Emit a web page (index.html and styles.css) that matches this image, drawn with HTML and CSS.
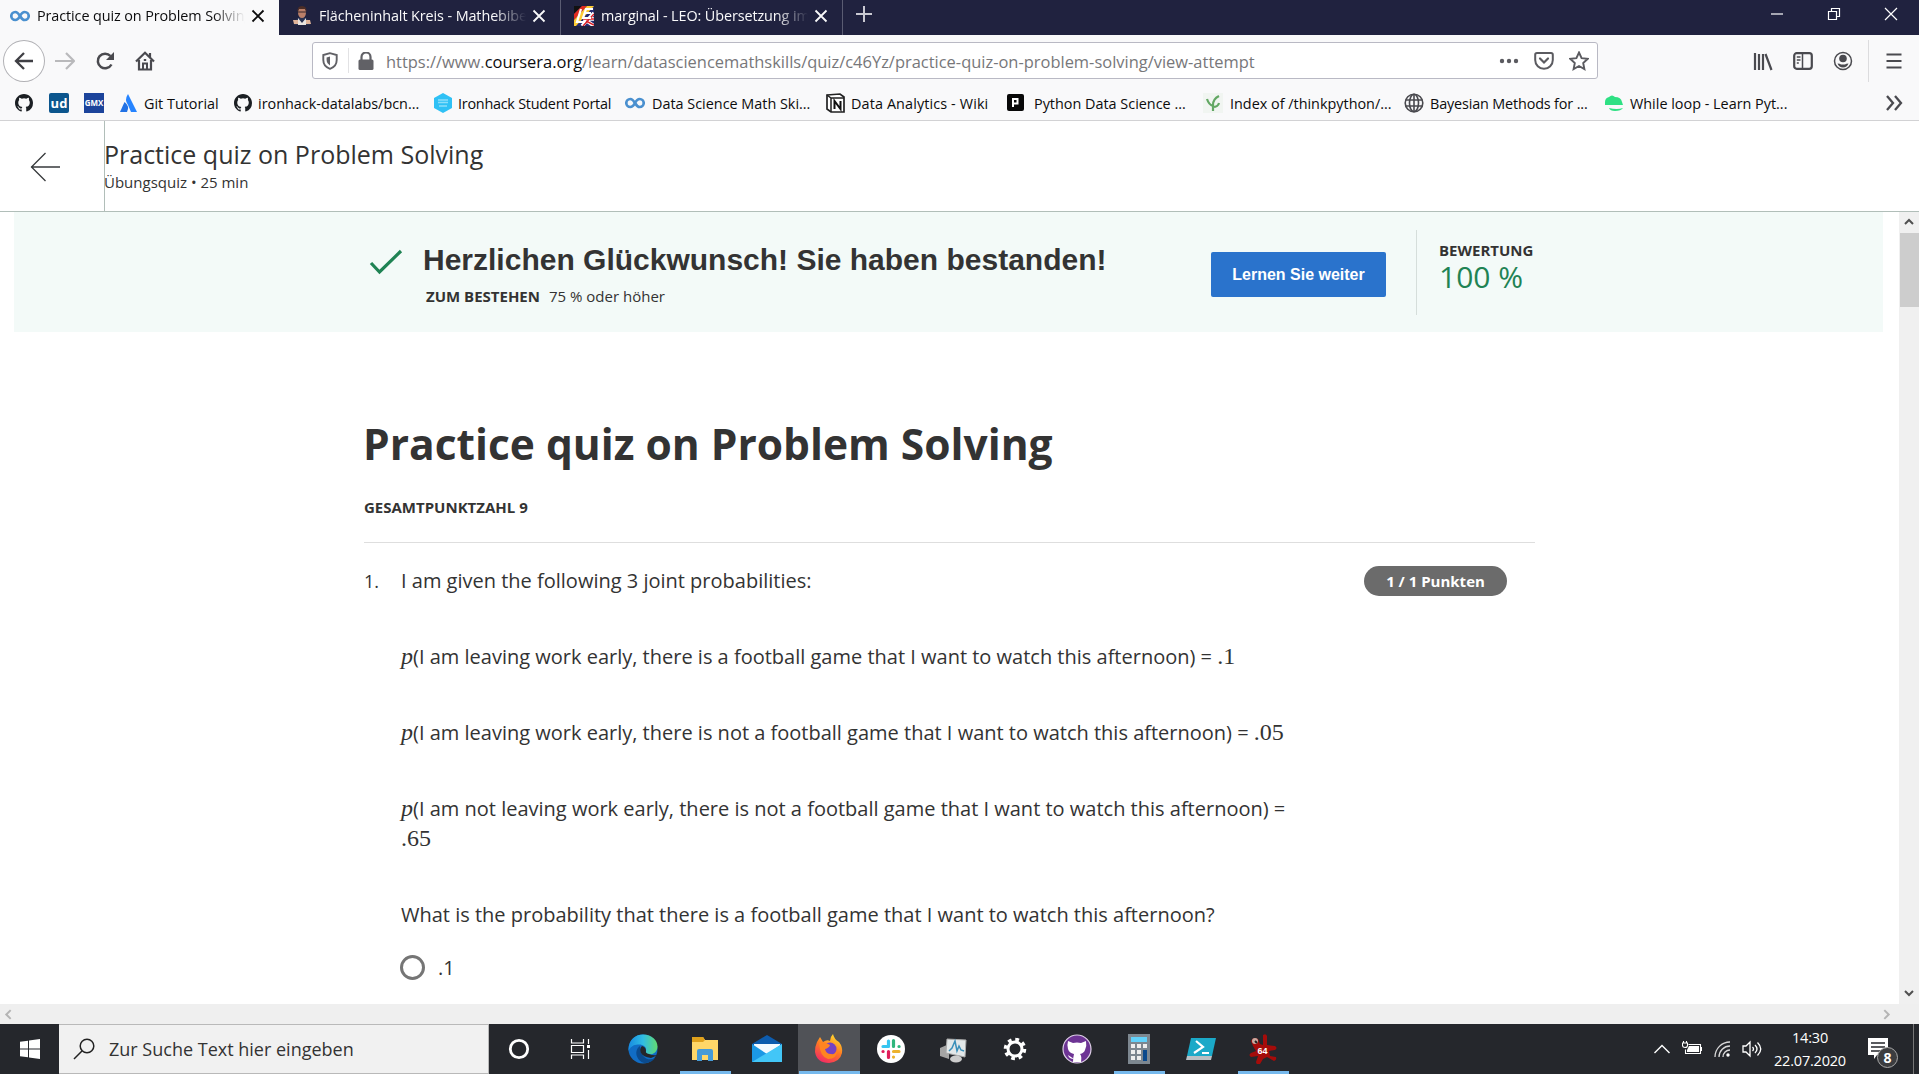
FILE: index.html
```html
<!DOCTYPE html>
<html lang="de">
<head>
<meta charset="utf-8">
<title>Practice quiz on Problem Solving</title>
<link rel="stylesheet" href="styles.css">
</head>
<body>
<svg class="defs" aria-hidden="true">
  <symbol id="octocat" viewBox="0 0 16 16"><path d="M8 0C3.58 0 0 3.58 0 8c0 3.54 2.29 6.53 5.47 7.59.4.07.55-.17.55-.38 0-.19-.01-.82-.01-1.49-2.01.37-2.53-.49-2.69-.94-.09-.23-.48-.94-.82-1.13-.28-.15-.68-.52-.01-.53.63-.01 1.08.58 1.23.82.72 1.21 1.87.87 2.33.66.07-.52.28-.87.51-1.07-1.78-.2-3.64-.89-3.64-3.95 0-.87.31-1.59.82-2.15-.08-.2-.36-1.02.08-2.12 0 0 .67-.21 2.2.82a7.6 7.6 0 0 1 4 0c1.53-1.04 2.2-.82 2.2-.82.44 1.1.16 1.92.08 2.12.51.56.82 1.27.82 2.15 0 3.07-1.87 3.75-3.65 3.95.29.25.54.73.54 1.48 0 1.07-.01 1.93-.01 2.2 0 .21.15.46.55.38A8 8 0 0 0 16 8c0-4.42-3.58-8-8-8z"/></symbol>
  <symbol id="infinity" viewBox="0 0 20 20"><path d="M10 10C8.500 7.400 7.300 6 5.300 6a4 4 0 0 0 0 8c2.500 0 3.700-2 4.700-4s2.200-4 4.700-4a4 4 0 0 1 0 8c-2 0-3.200-1.400-4.700-4z" fill="none" stroke="#4a90cf" stroke-width="2.700"/></symbol>
  <symbol id="cross" viewBox="0 0 14 14"><path d="M1.500 1.500l11 11M12.500 1.500l-11 11" fill="none" stroke="currentColor" stroke-width="1.800"/></symbol>
</svg>

<header class="tabs">
  <div class="tab tab-active"><svg class="i20"><use href="#infinity"/></svg><span class="tab-title">Practice quiz on Problem Solving</span><svg class="close"><use href="#cross"/></svg></div>
  <div class="tab"><svg class="i20" viewBox="0 0 20 20"><path d="M2 19q1-8 8-8t8 8z" fill="#283252"/><path d="M6 12l4 5 4-5v7H6z" fill="#e9e4e0"/><path d="M1 14h5v4H2zM14 14h4l1 4h-5z" fill="#e0b49a"/><ellipse cx="10" cy="6.500" rx="4" ry="5.500" fill="#b97f69"/><path d="M5.500 6Q5 0 10 0t4.500 6L13 3H7z" fill="#4b2d26"/><path d="M6 6h8" stroke="#38292b"/></svg><span class="tab-title">Flächeninhalt Kreis - Mathebibel</span><svg class="close"><use href="#cross"/></svg></div>
  <div class="tab"><svg class="i20" viewBox="0 0 20 20"><path fill="#252a70" d="M0 0h20v20H0z"/><path fill="#111" d="M0 0h8L0 8z"/><path fill="#e02b20" d="M8 0h5L0 14V8z"/><path fill="#fc3" d="M13 0h7L2 20H0v-6z"/><path d="M8 20L20 7M10 13l10 7M9 13h11" stroke="#fff" stroke-width="3.500"/><path d="M9 20L20 8M9 13h11M12 15l8 4" stroke="#d92028" stroke-width="1.500"/><path d="M7 3L3 16h8M19 3h-7l-3 9h8M11 7h6" fill="none" stroke="#fff" stroke-width="2.200"/></svg><span class="tab-title">marginal - LEO: Übersetzung im E</span><svg class="close"><use href="#cross"/></svg></div>
  <svg class="plus" viewBox="0 0 18 18"><path d="M9 1v16M1 9h16" stroke="#c9c9d2" stroke-width="2"/></svg>
  <div class="window-buttons">
    <svg viewBox="0 0 14 14"><path d="M1 7h12" stroke="#fff" stroke-width="1.200"/></svg>
    <svg viewBox="0 0 14 14"><path d="M1.500 4.500h8v8h-8zM4.500 4.500v-3h8v8h-3" fill="none" stroke="#fff" stroke-width="1.200"/></svg>
    <svg viewBox="0 0 14 14"><path d="M1 1l12 12M13 1L1 13" stroke="#fff" stroke-width="1.200"/></svg>
  </div>
</header>

<nav class="toolbar">
  <div class="back"><svg class="i20" viewBox="0 0 20 20"><path d="M19 10H2M10 2L2 10l8 8" fill="none" stroke="#3f3f44" stroke-width="2.300"/></svg></div>
  <svg class="i20 forward" viewBox="0 0 20 20"><path d="M0 10h18M11 2l8 8-8 8" fill="none" stroke="#b9b9bb" stroke-width="2.200"/></svg>
  <svg class="i20 reload" viewBox="0 0 20 20"><path d="M16.500 13.500A7.300 7.300 0 1 1 15.500 5" fill="none" stroke="#4a4a4f" stroke-width="2.500"/><path d="M19 1v8h-8z" fill="#4a4a4f"/></svg>
  <svg class="i20 home" viewBox="0 0 20 20"><path d="M1 10.500L10 1.700l9 8.800M4 9v9.500h12V9M15 2v5" fill="none" stroke="#4a4a4f" stroke-width="2.200"/><path d="M8 18v-5.500h4V18M8.800 9h2.400" fill="none" stroke="#4a4a4f" stroke-width="2"/></svg>
  <div class="address">
    <svg class="i18 shield" viewBox="0 0 18 18"><path d="M9 1.200L2.300 3v5c0 4.500 3 7.500 6.700 8.800 3.700-1.300 6.700-4.300 6.700-8.800V3z" fill="none" stroke="#616166" stroke-width="1.900"/><path d="M9 4.500v9C7 12 5.600 10.500 5.600 8V5.400z" fill="#616166"/></svg>
    <span class="divider"></span>
    <svg class="i18 lock" viewBox="0 0 18 18"><path d="M4.500 8V5a4.500 4.500 0 0 1 9 0v3" fill="none" stroke="#616166" stroke-width="2.200"/><rect x="1.500" y="7.500" width="15" height="10.500" rx="1.500" fill="#616166"/></svg>
    <span class="url">https://www.<b>coursera.org</b>/learn/datasciencemathskills/quiz/c46Yz/practice-quiz-on-problem-solving/view-attempt</span>
    <svg class="i20 dots" viewBox="0 0 20 20"><g fill="#5b5b60"><circle cx="3" cy="10" r="2.200"/><circle cx="10" cy="10" r="2.200"/><circle cx="17" cy="10" r="2.200"/></g></svg>
    <svg class="i20 pocket" viewBox="0 0 20 20"><path d="M3 2h14q1.800 0 1.800 1.800V9a8.800 8.800 0 0 1-17.600 0V3.800Q1.200 2 3 2z" fill="none" stroke="#5b5b60" stroke-width="2"/><path d="M6 7.500l4 4 4-4" fill="none" stroke="#5b5b60" stroke-width="2.200" stroke-linecap="round"/></svg>
    <svg class="i20 star" viewBox="0 0 20 20"><path d="M10 1.500l2.600 5.600 6.100.7-4.500 4.200 1.200 6.100L10 15l-5.400 3.100L5.800 12 1.300 7.800l6.100-.7z" fill="none" stroke="#5b5b60" stroke-width="1.900"/></svg>
  </div>
  <div class="tools">
    <svg class="i20" viewBox="0 0 20 20"><path d="M2 2v17M6 3v16M10 3v16M12.500 3l6 16" fill="none" stroke="#4a4a4f" stroke-width="2.200"/></svg>
    <svg class="i20" viewBox="0 0 20 20"><rect x="1.200" y="2.200" width="17.600" height="15.600" rx="2.500" fill="none" stroke="#4a4a4f" stroke-width="2.200"/><path d="M9.500 2v16M3.800 6h3.700M3.800 9h3.700M3.800 12h2" stroke="#4a4a4f" stroke-width="1.500"/></svg>
    <svg class="i20" viewBox="0 0 20 20"><circle cx="10" cy="10" r="8.500" fill="none" stroke="#4a4a4f" stroke-width="1.500"/><circle cx="10" cy="7.500" r="3.800" fill="#4a4a4f"/><path d="M4.500 12.500q2.500 0 3.500 1h4q1-1 3.500-1-1.500 4-5.500 4t-5.500-4z" fill="#4a4a4f"/></svg>
  </div>
  <div class="menu"><svg class="i20" viewBox="0 0 20 20"><path d="M2.500 3.500h15M2.500 10h15M2.500 16.500h15" stroke="#4a4a4f" stroke-width="2.200"/></svg></div>
</nav>

<nav class="bookmarks">
  <div><svg class="i18b"><use href="#octocat"/></svg></div>
  <div><svg class="i20" viewBox="0 0 20 20"><rect width="20" height="20" rx="2" fill="#0c568d"/><text x="10" y="15" class="ud">ud</text></svg></div>
  <div><svg class="i20" viewBox="0 0 20 20"><path d="M0 0h20v20H0z" fill="#1c449b"/><text x="10" y="13" class="gmx">GMX</text></svg></div>
  <div><svg class="i20" viewBox="0 0 20 20"><path d="M9 1q-4 6 0 11l3 7h6z" fill="#2684ff"/><path d="M5.500 9Q11 13 8 19H1z" fill="#2272e5"/></svg><span>Git Tutorial</span></div>
  <div><svg class="i18b"><use href="#octocat"/></svg><span>ironhack-datalabs/bcn...</span></div>
  <div><svg class="i20" viewBox="0 0 20 20"><path d="M10 0l9 5v10l-9 5-9-5V5z" fill="#2fc1f5"/><path d="M5 7h10M5 9.500h10M6 13h8" stroke="#8bdefa" stroke-width="1.500"/></svg><span class="narrow">Ironhack Student Portal</span></div>
  <div><svg class="i20"><use href="#infinity"/></svg><span class="shift2">Data Science Math Ski...</span></div>
  <div><svg class="i20" viewBox="0 0 20 20"><path d="M1 2l13-1 4 3v15H5l-4-3z" fill="#fff" stroke="#222" stroke-width="1.700"/><path d="M1 2l4 3h13M5 5v14" fill="none" stroke="#222" stroke-width="1.500"/><path d="M8.500 16V8l6 8V8" fill="none" stroke="#111" stroke-width="2"/></svg><span class="wide">Data Analytics - Wiki</span></div>
  <div><svg class="i20" viewBox="0 0 20 20"><rect x="2" y="1" width="17" height="17" rx="2" fill="#080808"/><path d="M8 14V6h4.500v4.500H8" fill="none" stroke="#fff" stroke-width="2"/></svg><span class="shift4">Python Data Science ...</span></div>
  <div><svg class="i20" viewBox="0 0 20 20"><path d="M0 0h20v20H0z" fill="#f1f5f1"/><path d="M10 18V11M10 13Q6 12 4 6M10 12q0-6 6-9M10 14q5 0 6-4" fill="none" stroke="#62a763" stroke-width="2.200"/></svg><span class="shift2">Index of /thinkpython/...</span></div>
  <div><svg class="i20" viewBox="0 0 20 20"><g fill="none" stroke="#4a4a4f" stroke-width="1.600"><circle cx="10" cy="10" r="8.800"/><ellipse cx="10" cy="10" rx="4.500" ry="8.800"/><path d="M10 1v18M1.500 7h17M1.500 13h17"/></g></svg><span class="shift1 narrow2">Bayesian Methods for ...</span></div>
  <div><svg class="i20" viewBox="0 0 20 20"><path d="M1 9q0-4 4-5 3-3 6 0 6 0 7 5l1 3H1z" fill="#2ee083"/><path d="M5 15q8 2 14 0-2 3-8 3-5 0-6-3z" fill="#2ee083"/></svg><span class="shift1">While loop - Learn Pyt...</span></div>
  <div><svg class="i20" viewBox="0 0 20 20"><path d="M3 3l6 7-6 7M11 3l6 7-6 7" fill="none" stroke="#4a4a4f" stroke-width="2.300"/></svg></div>
</nav>

<section class="item-header">
  <div class="item-back"><svg viewBox="0 0 30 30"><path d="M30 15H1M15.500 1L1.500 15l14 14" fill="none" stroke="#373a3c" stroke-width="1.300"/></svg></div>
  <div class="item-title"><div class="name">Practice quiz on Problem Solving</div><div class="kind">Übungsquiz • 25 min</div></div>
</section>

<div class="viewport">
  <main class="page">
    <section class="banner">
      <svg class="check" viewBox="0 0 34 26"><path d="M2 14l8.500 9L32 2" fill="none" stroke="#1f8354" stroke-width="3.200"/></svg>
      <div class="result"><h2>Herzlichen Glückwunsch! Sie haben bestanden!</h2><div class="need"><b>ZUM BESTEHEN</b><span>75 % oder höher</span></div></div>
      <button class="next">Lernen Sie weiter</button>
      <div class="grade"><b>BEWERTUNG</b><span>100 %</span></div>
    </section>
    <article class="quiz">
      <h1>Practice quiz on Problem Solving</h1>
      <div class="total">GESAMTPUNKTZAHL 9</div>
      <div class="question">
        <span class="number">1.</span>
        <div class="prompt">
          <p>I am given the following 3 joint probabilities:</p>
          <p><i>p</i>(I am leaving work early, there is a football game that I want to watch this afternoon) = <em>.1</em></p>
          <p><i>p</i>(I am leaving work early, there is not a football game that I want to watch this afternoon) = <em>.05</em></p>
          <p><i>p</i>(I am not leaving work early, there is not a football game that I want to watch this afternoon) =<br><em>.65</em></p>
          <p class="ask">What is the probability that there is a football game that I want to watch this afternoon?</p>
          <div class="option"><span class="radio"></span><span class="label">.1</span></div>
        </div>
        <span class="points">1 / 1 Punkten</span>
      </div>
    </article>
  </main>
  <div class="vscroll">
    <svg viewBox="0 0 10 10"><path d="M1 7l4-4 4 4" fill="none" stroke="#505050" stroke-width="2"/></svg>
    <div class="thumb"></div>
    <svg viewBox="0 0 10 10"><path d="M1 3l4 4 4-4" fill="none" stroke="#505050" stroke-width="2"/></svg>
  </div>
</div>
<div class="hscroll">
  <svg viewBox="0 0 10 10"><path d="M7 1L3 5l4 4" fill="none" stroke="#b5b5b5" stroke-width="1.800"/></svg>
  <svg viewBox="0 0 10 10"><path d="M3 1l4 4-4 4" fill="none" stroke="#b5b5b5" stroke-width="1.800"/></svg>
</div>

<footer class="taskbar">
  <div class="start"><svg class="i20" viewBox="0 0 20 20"><path d="M0 2.800L8 1.700v7.800H0zM9 1.500L20 0v9.500H9zM0 10.500h8v7.800L0 17.200zM9 10.500h11V20L9 18.500z" fill="#fff"/></svg></div>
  <div class="search"><svg viewBox="0 0 22 22"><circle cx="14" cy="8" r="6.800" fill="none" stroke="#222" stroke-width="1.500"/><path d="M9.200 12.800L1 21" stroke="#222" stroke-width="1.500"/></svg><span>Zur Suche Text hier eingeben</span></div>
  <div class="apps">
    <div><svg viewBox="0 0 30 30"><circle cx="15" cy="15" r="8.700" fill="none" stroke="#fff" stroke-width="2.800"/></svg></div>
    <div><svg viewBox="0 0 30 30"><path d="M5.500 5v4h12V5M5.500 25v-4h12v4M5.500 11.500h12v7h-12zM22.500 5v5M22.500 16v9" fill="none" stroke="#fff" stroke-width="1.200"/><path d="M21 11h3v3h-3z" fill="#fff"/></svg></div>
    <div><svg viewBox="0 0 30 30"><defs><linearGradient id="edge" x2="1"><stop stop-color="#188be0"/><stop offset=".5" stop-color="#30bde4"/><stop offset="1" stop-color="#62da70"/></linearGradient></defs><circle cx="15" cy="15" r="14.500" fill="#116dc5"/><path d="M.5 15C1 5 8 .5 15 .5c9 0 14.500 6 14.500 12 0 5-4 8-8 8-3 0-4.500-1-3.500-3 1-5-3-7-7-7C6 10 2 13 .5 17z" fill="url(#edge)"/><path d="M12 12c-7 5-3 15 4 17 5 0 9-2 11-5-7 4-15-1-15-12z" fill="#0b4b8e"/><path d="M14 12q-3 3-1 7t10 5l7-3q-5 1-9-1-4-1-3-3 0-4-4-5z" fill="#25262b"/></svg></div>
    <div class="open"><svg viewBox="0 0 30 30"><path d="M2 3h11l2 3h13v20H2z" fill="#ffd768"/><path d="M2 3h11l2 3-2 2H2z" fill="#e0a11c"/><path d="M7 27V17q0-2 2-2h12q2 0 2 2v10h-5v-6h-6v6z" fill="#469bd7"/></svg></div>
    <div><svg viewBox="0 0 30 30"><path d="M0 10L15 1l15 9v4H0z" fill="#0d5cae"/><path d="M2 10h26v10H2z" fill="#f4faff"/><path d="M0 10l15 10L30 10v18H0z" fill="#1b98e5"/><path d="M0 28l30-18v18z" fill="#42c6f7"/></svg></div>
    <div class="open active"><svg viewBox="0 0 30 30"><defs><linearGradient id="fox" x1=".8" y1="0" x2=".3" y2="1"><stop stop-color="#ffe22f"/><stop offset=".5" stop-color="#ff7a22"/><stop offset="1" stop-color="#f22a65"/></linearGradient></defs><path d="M3 8l3-5 3 5q4-3 7-1 0-4 3-7 1 5 6 8 4 5 3 11-2 9-13 10Q3 29 1 18q0-6 2-10z" fill="url(#fox)"/><circle cx="16" cy="15" r="6.500" fill="#7542c4"/><path d="M5 9q5-2 11 2-1 3-5 4 1 5 6 5 5 1 7-5-1 10-10 10Q6 23 5 9z" fill="#ff8420"/></svg></div>
    <div><svg viewBox="0 0 30 30"><circle cx="15" cy="15" r="14" fill="#fff"/><g fill="none" stroke-linecap="round" stroke-width="3.200"><path d="M12.500 7v5M7 12.500h5.500" stroke="#36c5f0"/><path d="M17.500 6.500v6M23 12.500h.100" stroke="#2eb67d"/><path d="M17.500 17.500H23M17.500 23v.100" stroke="#ecb22e"/><path d="M12.500 17.500v6M7 17.500h.100" stroke="#e01e5a"/></g></svg></div>
    <div><svg viewBox="0 0 30 30"><path d="M2 14l9-4v15l-9-3z" fill="#a4a4a4"/><path d="M9 5l19 1-1 17-19-4z" fill="#e3e8e9" stroke="#aaa"/><path d="M11 17l3-3 3-7 2 10 2-5 2 4 3 1" fill="none" stroke="#3a8fb9" stroke-width="1.500"/><ellipse cx="18" cy="25" rx="6" ry="3.500" fill="#ccc"/></svg></div>
    <div><svg viewBox="0 0 30 30"><circle cx="15" cy="15" r="7" fill="none" stroke="#fff" stroke-width="3"/><circle cx="15" cy="15" r="9.500" fill="none" stroke="#fff" stroke-width="3.500" stroke-dasharray="3.700 3.760"/></svg></div>
    <div><svg viewBox="0 0 30 30"><circle cx="15" cy="15" r="14" fill="#6d3494" stroke="#dfd1e8" stroke-width="1.200"/><path d="M6 7l5 2q4-1 8 0l5-2q1 5-1 9-1 3-5 4 2 2 1 8h-8q0-4 1-8-5-1-6-5-1-5 0-8zM12 25q-5 0-6-4" fill="#fff"/></svg></div>
    <div class="open"><svg viewBox="0 0 30 30"><path d="M4 0h22v30H4z" fill="#7d8790"/><path d="M7 3h16v5H7z" fill="#62d1fa"/><path d="M7 10h4v4H7zM13 10h4v4h-4zM19 10h4v4h-4zM7 16h4v4H7zM13 16h4v4h-4zM7 22h4v4H7zM13 22h4v4h-4z" fill="#eee"/><path d="M19 16h4v11h-4z" fill="#0a498d"/></svg></div>
    <div><svg viewBox="0 0 30 30"><path d="M5 4h25l-4 18H1z" fill="#1ba9c8"/><path d="M1 22h25l-1 4H0z" fill="#b8c0c4"/><path d="M10 7l7 6-9 6M16 19h7" fill="none" stroke="#fff" stroke-width="2.200"/></svg></div>
    <div class="open"><svg viewBox="0 0 30 30"><path d="M3 7q2-5 7-2l2 5 3 1 0-10q3-2 4 1v9l8 1q3 2 0 4l-6 1 1 5 6 1q1 3-2 4l-7-4-4 2-3 5q-4 1-4-2l2-6-7 1q-3-2 0-4l5-2-3-5z" fill="#a50c0a"/><circle cx="7" cy="7" r="3" fill="#c9aaa0"/><path d="M7 7l2 2" stroke="#222" stroke-width="2"/><text x="14.500" y="19.500" class="bit">64</text></svg></div>
  </div>
  <div class="tray">
    <svg viewBox="0 0 20 20"><path d="M2.500 14L10 6.500l7.500 7.500" fill="none" stroke="#fff" stroke-width="1.400"/></svg>
    <svg viewBox="0 0 20 20"><path d="M7 7h10v6H5v-2z" fill="#fff"/><path d="M6.500 5.500h12v9H3.500v-4M19.500 8v4M.5 4h5v2.500q0 2-2.500 2T.5 6.500zM1.500 2v2M4.500 2v2" fill="none" stroke="#fff" stroke-width="1.100"/></svg>
    <svg viewBox="0 0 20 20"><g fill="none" stroke="#d9d9da" stroke-width="1.300"><path d="M3 18A15 15 0 0 1 18 3M7 18A11 11 0 0 1 18 7M11 18a7 7 0 0 1 7-7"/></g><circle cx="16" cy="16" r="1.700" fill="#fff"/></svg>
    <svg viewBox="0 0 20 20"><path d="M1 7h3l4-4v14l-4-4H1zM10.500 8q2 2 0 4M13 6q4 4 0 8M15.500 3.500q6.500 6.500 0 13" fill="none" stroke="#fff" stroke-width="1.300"/></svg>
  </div>
  <div class="clock"><span>14:30</span><span>22.07.2020</span></div>
  <div class="notes"><svg viewBox="0 0 32 34"><path d="M1 3h20v17H10l-3 4v-4H1z" fill="#fff"/><path d="M4 8h14M4 12h14M4 16h10" stroke="#25262b" stroke-width="1.400"/><circle cx="20.500" cy="22.500" r="10" fill="#3c3d40" stroke="#aaa"/><text x="20.500" y="28" class="count">8</text></svg></div>
  <div class="peek"></div>
</footer>
</body>
</html>
```
FILE: styles.css
```css
* { box-sizing: border-box; }
body {
  margin: 0;
  width: 1919px;
  height: 1074px;
  overflow: hidden;
  display: flex;
  flex-direction: column;
  background: #fff;
  color: #333;
  font-family: "Open Sans", "Noto Sans", sans-serif;
}
svg { display: block; flex: none; }
p, h1, h2 { margin: 0; }
.defs { position: absolute; width: 0; height: 0; }
.i20 { width: 20px; height: 20px; }
.i18 { width: 18px; height: 18px; }
.i18b { width: 18px; height: 18px; margin: 0 1px; fill: #1b1f23; }

/* Tab strip */
.tabs { height: 35px; flex: none; display: flex; background: #20223f; }
.tab {
  width: 281px;
  display: flex;
  align-items: center;
  padding: 0 14px 4px 13px;
  color: #f9f9fa;
  border-right: 1px solid #5a5c72;
}
.tab + .tab { width: 282px; }
.tab-active { width: 279px; padding: 0 14px 4px 10px; background: #f9f9fa; color: #0c0c0d; border: 0; }
.tab-title {
  flex: 1;
  margin: 0 6px 0 7px;
  overflow: hidden;
  white-space: nowrap;
  font-size: 14.4px;
  letter-spacing: -0.1px;
  -webkit-mask-image: linear-gradient(to left, transparent, #000 32px);
  mask-image: linear-gradient(to left, transparent, #000 32px);
}
.close { width: 14px; height: 14px; }
.plus { width: 18px; height: 18px; margin: 5px 0 0 12px; }
.window-buttons { margin-left: auto; display: flex; gap: 43px; padding: 7px 21px 0 0; }
.window-buttons svg { width: 14px; height: 14px; }

/* Navigation toolbar */
.toolbar { height: 50px; flex: none; display: flex; align-items: center; background: #f9f9fa; }
.back {
  width: 42px; height: 42px; margin-left: 3px;
  display: grid; place-items: center;
  border: 1px solid #b1b1b5; border-radius: 50%; background: #fff;
}
.forward { margin-left: 10px; }
.reload { margin-left: 20px; }
.home { margin-left: 20px; }
.address {
  width: 1287px; height: 37px; margin-left: 157px;
  display: flex; align-items: center;
  border: 1px solid #b9b9c4; border-radius: 3px; background: #fff;
}
.shield { margin-left: 8px; }
.divider { width: 1px; height: 25px; margin: 0 8px 0 9px; background: #e2e2e4; }
.url { flex: 1; margin-left: 11px; padding-top: 2px; font-size: 16.47px; color: #77777a; white-space: nowrap; }
.url b { font-weight: 400; color: #0c0c0d; }
.pocket { margin-left: 15px; }
.star { margin: 0 8px 0 15px; }
.tools { display: flex; gap: 20px; margin-left: 155px; }
.menu { margin-left: 15px; padding: 0 15px; height: 42px; display: flex; align-items: center; border-left: 1px solid #dcdcde; }
.toolbar { padding-top: 1px; }

/* Bookmarks */
.bookmarks {
  height: 36px; flex: none;
  display: grid;
  grid-template-columns: 35px 35px 35px 114px 200px 192px 201px 179px 198px 201px 200px 280px auto;
  padding: 1px 0 0 14px;
  align-items: center;
  background: #f9f9fa;
  border-bottom: 1px solid #d2d2d4;
  font-size: 14.4px;
  color: #0c0c0d;
  white-space: nowrap;
}
.bookmarks div { display: flex; align-items: center; gap: 5px; }
.shift1 { margin-left: 1px; }
.shift2 { margin-left: 2px; }
.shift4 { margin-left: 4px; }
.narrow { letter-spacing: -0.25px; }
.narrow2 { letter-spacing: -0.15px; }
.wide { letter-spacing: 0.12px; }
.ud { font: 700 13px "Open Sans", sans-serif; fill: #fff; text-anchor: middle; }
.gmx { font: 700 8px "Open Sans", sans-serif; fill: #fff; text-anchor: middle; }
.bit { font: 700 9px "Liberation Sans", sans-serif; fill: #fff; text-anchor: middle; }

/* Quiz header */
.item-header { height: 91px; flex: none; display: flex; border-bottom: 1px solid #b1beb9; }
.item-back { width: 105px; padding: 31px 0 0 30px; border-right: 1px solid #b1beb9; }
.item-back svg { width: 30px; height: 30px; }
.item-title { padding-top: 16px; margin-left: -1px; }
.name { font-size: 25px; line-height: 34px; }
.kind { font-size: 15px; line-height: 22px; }

/* Page body */
.viewport { height: 792px; flex: none; display: flex; overflow: hidden; }
.page { width: 1899px; padding-left: 14px; }
.banner { width: 1869px; height: 120px; display: flex; background: #f3faf8; }
.check { width: 34px; height: 26px; margin: 37px 0 0 355px; }
.result { width: 789px; padding-left: 20px; white-space: nowrap; }
.result h2 { margin-top: 29px; font: 700 30px/38px "Liberation Sans", Arial, sans-serif; }
.need { display: flex; gap: 9px; padding: 6px 0 0 3px; font-size: 15px; line-height: 22px; }
.next {
  width: 175px; height: 45px; margin: 40px 30px 0 19px; padding: 0;
  border: 0; border-radius: 2px; background: #2a73cc; color: #fff;
  font: 700 16px "Liberation Sans", Arial, sans-serif;
}
.grade { height: 85px; margin-top: 18px; padding: 9px 0 0 22px; border-left: 1px solid #d5dedb; }
.grade b, .grade span { display: block; }
.grade b { font-size: 15px; line-height: 22px; }
.grade span { font-size: 30px; line-height: 32px; color: #1f8354; }

.quiz { width: 1171px; margin: 81px 0 0 350px; }
.quiz h1 { margin-left: -1px; font-size: 42.5px; line-height: 62px; }
.total { height: 47px; margin-top: 21px; font-weight: 700; font-size: 15px; line-height: 22px; border-bottom: 1px solid #dedede; }
.question { display: flex; padding-top: 23px; align-items: flex-start; }
.number { width: 37px; font-size: 18px; line-height: 30px; }
.prompt { width: 963px; font-size: 20px; line-height: 30px; white-space: nowrap; }
.prompt p { margin-bottom: 46px; }
.prompt i, .prompt em { font-family: "Liberation Serif", serif; font-size: 24px; line-height: 1; }
.prompt em { font-style: normal; }
.prompt .ask { margin-bottom: 21px; }
.option { display: flex; align-items: center; gap: 13px; margin-left: -1px; }
.option .label { padding-top: 2px; }
.radio { width: 25px; height: 25px; border: 3px solid #757575; border-radius: 50%; }
.points { width: 143px; height: 30px; border-radius: 15px; background: #6b6b6b; color: #fff; font-weight: 700; font-size: 15px; line-height: 30px; text-align: center; }

/* Scrollbars */
.vscroll { width: 20px; display: flex; flex-direction: column; align-items: center; background: #f0f0f0; padding: 5px 0 6px; }
.vscroll svg { width: 10px; height: 10px; }
.thumb { width: 19px; height: 74px; margin: 6px 0 auto; background: #cdcdcd; }
.hscroll { height: 20px; flex: none; display: flex; justify-content: space-between; align-items: center; padding: 0 27px 0 3px; background: #efefef; }
.hscroll svg { width: 11px; height: 11px; }

/* Taskbar */
.taskbar { height: 50px; flex: none; display: flex; background: #25272c; color: #fff; }
.start { width: 59px; display: grid; place-items: center; }
.search { width: 430px; display: flex; align-items: center; gap: 14px; padding-left: 14px; background: #f1f1f1; border: 1px solid #b9b9b9; border-left: 0; color: #333; font-size: 18px; }
.search svg { width: 22px; height: 22px; }
.apps { display: flex; margin-left: -1px; }
.apps div { width: 62px; height: 50px; display: grid; place-items: center; }
.apps svg { width: 30px; height: 30px; }
.apps .open { background: linear-gradient(#76b9ed, #76b9ed) 50% 100% / 51px 3px no-repeat; }
.apps .active { background: linear-gradient(#76b9ed, #76b9ed) 50% 100% / 61px 3px no-repeat, #505257; }
.tray { margin-left: 358px; display: flex; gap: 10px; align-items: center; }
.tray svg { width: 20px; height: 20px; }
.clock { width: 96px; display: flex; flex-direction: column; justify-content: center; align-items: center; font-size: 14.5px; line-height: 23px; letter-spacing: -0.2px; }
.notes { padding: 11px 0 0 9px; }
.notes svg { width: 32px; height: 34px; }
.count { font: 700 14px "Open Sans", sans-serif; fill: #fff; text-anchor: middle; }
.peek { margin-left: auto; width: 6px; border-left: 1px solid #777; }
```
